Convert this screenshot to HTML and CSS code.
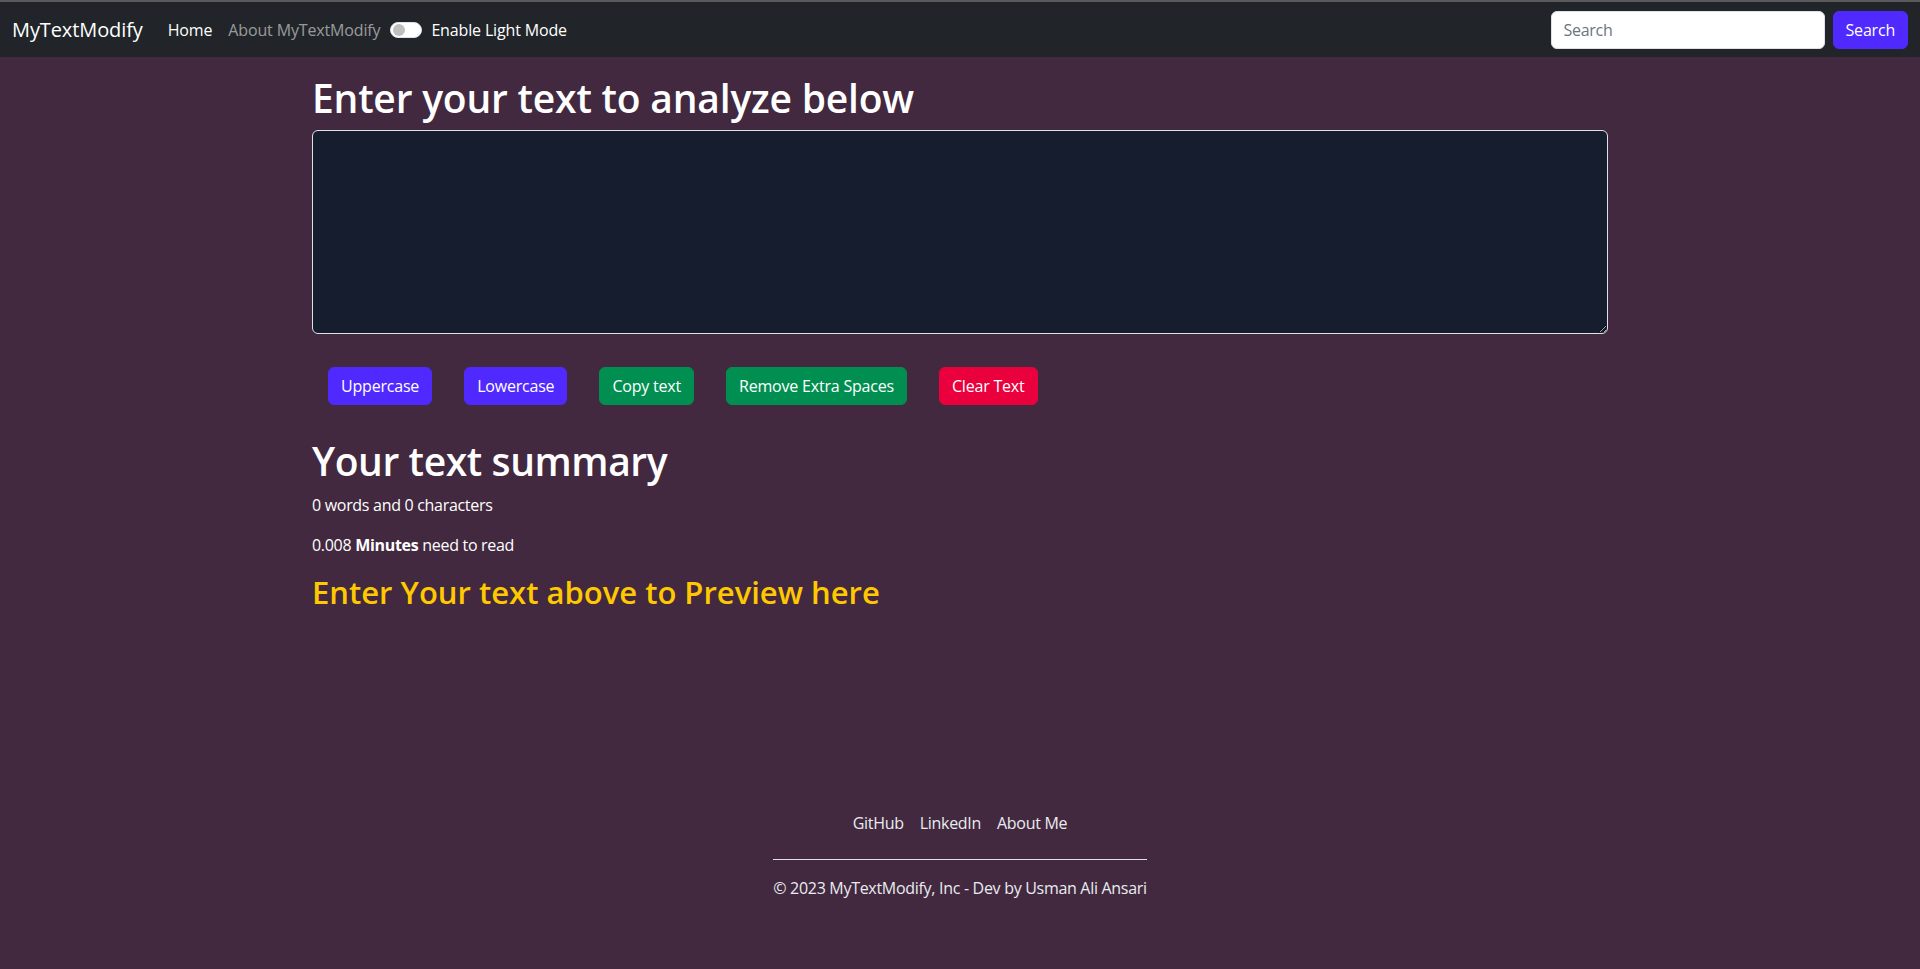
FILE: index.html
```html
<!DOCTYPE html>
<html lang="en">
<head>
<meta charset="utf-8">
<title>MyTextModify</title>
<link rel="stylesheet" href="styles.css">
</head>
<body>
<nav class="navbar">
  <div class="nav-left">
    <a class="brand" href="#">MyTextModify</a>
    <ul class="nav-links">
      <li><a class="nav-link active" href="#">Home</a></li>
      <li><a class="nav-link" href="#">About MyTextModify</a></li>
    </ul>
    <label class="switch">
      <span class="switch-track"><span class="switch-knob"></span></span>
      <span class="switch-label">Enable Light Mode</span>
    </label>
  </div>
  <form class="search-form">
    <input class="search-input" type="search" placeholder="Search">
    <button class="btn btn-primary" type="button">Search</button>
  </form>
</nav>

<main class="container">
  <section class="analyzer">
    <h1 class="title">Enter your text to analyze below</h1>
    <textarea class="text-box" rows="8"></textarea>
    <div class="actions">
      <button class="btn btn-primary" type="button">Uppercase</button>
      <button class="btn btn-primary" type="button">Lowercase</button>
      <button class="btn btn-success" type="button">Copy text</button>
      <button class="btn btn-success" type="button">Remove Extra Spaces</button>
      <button class="btn btn-danger" type="button">Clear Text</button>
    </div>
  </section>
  <section class="summary">
    <h1 class="title">Your text summary</h1>
    <p class="stat">0 words and 0 characters</p>
    <p class="stat">0.008 <b>Minutes</b> need to read</p>
    <h2 class="preview-title">Enter Your text above to Preview here</h2>
  </section>
</main>

<footer class="footer">
  <ul class="footer-links">
    <li><a href="#">GitHub</a></li>
    <li><a href="#">LinkedIn</a></li>
    <li><a href="#">About Me</a></li>
  </ul>
  <p class="copyright">© 2023 MyTextModify, Inc - Dev by Usman Ali Ansari</p>
</footer>
</body>
</html>
```
FILE: styles.css
```css
* { box-sizing: border-box; }
html, body { margin: 0; padding: 0; }
body {
  background: #42293f;
  color: #fff;
  font-family: "Open Sans", "Noto Sans", sans-serif;
  font-size: 16px;
  line-height: 24px;
  letter-spacing: -0.3px;
  border-top: 2px solid #5a5a5a;
  min-height: 969px;
}
a { text-decoration: none; color: inherit; }
ul { list-style: none; margin: 0; padding: 0; }

.navbar {
  background: #212529;
  display: flex;
  justify-content: space-between;
  align-items: center;
  padding: 9px 12px 8px 12px;
  height: 55px;
}
.nav-left { display: flex; align-items: center; }
.brand {
  font-size: 20px;
  line-height: 30px;
  color: #fff;
  margin-right: 17px;
  letter-spacing: -0.1px;
}
.nav-links { display: flex; }
.nav-link {
  display: block;
  padding: 8px;
  color: rgba(255,255,255,.55);
  letter-spacing: -0.15px;
}
.nav-link.active { color: #fff; }
.switch { display: flex; align-items: center; margin-left: 2px; }
.switch-track {
  width: 32px;
  height: 16px;
  border-radius: 8px;
  background: #fff;
  border: 1px solid #dee2e6;
  display: flex;
  align-items: center;
  padding-left: 2px;
}
.switch-knob {
  width: 12px;
  height: 12px;
  border-radius: 50%;
  background: #bfbfbf;
}
.switch-label { margin-left: 9px; letter-spacing: -0.15px; }

.search-form { display: flex; align-items: center; gap: 8px; }
.search-input {
  width: 274px;
  height: 38px;
  border: 1px solid #dee2e6;
  border-radius: 6px;
  padding: 6px 12px;
  font-family: inherit;
  font-size: 16px;
  letter-spacing: -0.3px;
  color: #212529;
  background: #fff;
}
.search-input::placeholder { color: #6c757d; }

.btn {
  font-family: inherit;
  font-size: 16px;
  line-height: 24px;
  padding: 6px 12px;
  border: 1px solid transparent;
  border-radius: 6px;
  color: #fff;
  cursor: pointer;
  letter-spacing: -0.2px;
}
.btn-primary { background: #5029ff; border-color: #5029ff; }
.btn-success { background: #018f51; border-color: #018f51; }
.btn-danger { background: #e9003c; border-color: #e9003c; }

.container {
  width: 1320px;
  margin: 0 auto;
  padding: 0 12px;
}
.analyzer { padding-top: 17px; }
.title {
  font-size: 39px;
  font-weight: 600;
  line-height: 48px;
  margin: 0 0 8px 0;
  letter-spacing: -0.2px;
}
.text-box {
  display: block;
  width: 100%;
  height: 204px;
  background: #151d2e;
  border: 1px solid #dee2e6;
  border-radius: 6px;
  color: #fff;
  padding: 6px 12px;
  font-family: inherit;
  font-size: 16px;
  resize: vertical;
}
.actions {
  display: flex;
  gap: 32px;
  padding: 33px 16px 0 16px;
}
.summary { padding-top: 32px; }
.summary .title { letter-spacing: -0.4px; }
.stat { margin: 0 0 16px 0; }
.stat b { font-weight: 700; }
.preview-title {
  font-size: 31px;
  font-weight: 600;
  line-height: 38px;
  color: #ffc800;
  margin: 0;
  letter-spacing: 0;
}

.footer {
  width: fit-content;
  margin: 192px auto 0 auto;
}
.footer-links {
  display: flex;
  justify-content: center;
  padding-bottom: 16px;
  border-bottom: 1px solid #dee2e6;
}
.footer-links a {
  display: block;
  padding: 8px;
  color: #e9ecef;
}
.copyright {
  margin: 16px 0 0 0;
  text-align: center;
  color: #e9ecef;
}
```
